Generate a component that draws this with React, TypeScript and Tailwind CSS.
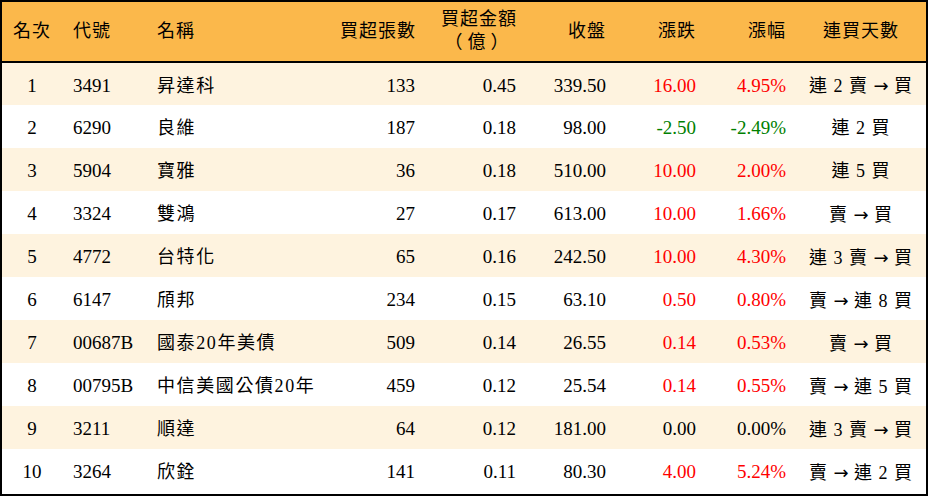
type Row = {
  rank: number;
  code: string;
  name: string;
  lots: number;
  amount: string;
  close: string;
  change: string;
  pct: string;
  streak: string;
};

const rows: Row[] = [
  { rank: 1, code: '3491', name: '昇達科', lots: 133, amount: '0.45', close: '339.50', change: '16.00', pct: '4.95%', streak: '連 2 賣 → 買' },
  { rank: 2, code: '6290', name: '良維', lots: 187, amount: '0.18', close: '98.00', change: '-2.50', pct: '-2.49%', streak: '連 2 買' },
  { rank: 3, code: '5904', name: '寶雅', lots: 36, amount: '0.18', close: '510.00', change: '10.00', pct: '2.00%', streak: '連 5 買' },
  { rank: 4, code: '3324', name: '雙鴻', lots: 27, amount: '0.17', close: '613.00', change: '10.00', pct: '1.66%', streak: '賣 → 買' },
  { rank: 5, code: '4772', name: '台特化', lots: 65, amount: '0.16', close: '242.50', change: '10.00', pct: '4.30%', streak: '連 3 賣 → 買' },
  { rank: 6, code: '6147', name: '頎邦', lots: 234, amount: '0.15', close: '63.10', change: '0.50', pct: '0.80%', streak: '賣 → 連 8 買' },
  { rank: 7, code: '00687B', name: '國泰20年美債', lots: 509, amount: '0.14', close: '26.55', change: '0.14', pct: '0.53%', streak: '賣 → 買' },
  { rank: 8, code: '00795B', name: '中信美國公債20年', lots: 459, amount: '0.12', close: '25.54', change: '0.14', pct: '0.55%', streak: '賣 → 連 5 買' },
  { rank: 9, code: '3211', name: '順達', lots: 64, amount: '0.12', close: '181.00', change: '0.00', pct: '0.00%', streak: '連 3 賣 → 買' },
  { rank: 10, code: '3264', name: '欣銓', lots: 141, amount: '0.11', close: '80.30', change: '4.00', pct: '5.24%', streak: '賣 → 連 2 買' },
];

function tone(v: string) {
  if (v.startsWith('-')) return 'text-[#008000]';
  if (parseFloat(v) > 0) return 'text-[#ff0000]';
  return 'text-black';
}

// the arrow is drawn with DejaVu Sans, whose → is longer than the serif one
function Streak({ text }: { text: string }) {
  const parts = text.split('→');
  return (
    <>
      {parts.map((p, i) => (
        <span key={i}>
          {i > 0 && <span className="font-['DejaVu_Sans',sans-serif] tracking-normal">→</span>}
          {p}
        </span>
      ))}
    </>
  );
}

export default function App() {
  return (
    <div className="w-[928px] h-[496px] bg-white border-2 border-black font-['Liberation_Serif','Noto_Sans_CJK_TC',serif] text-black">
      <table className="w-full table-fixed border-collapse">
        <colgroup>
          <col className="w-[60px]" />
          <col className="w-[84px]" />
          <col className="w-[184px]" />
          <col className="w-[95px]" />
          <col className="w-[101px]" />
          <col className="w-[90px]" />
          <col className="w-[90px]" />
          <col className="w-[90px]" />
          <col className="w-[130px]" />
        </colgroup>
        <thead>
          <tr className="h-[60px] bg-[#fbb84b] border-b-2 border-black text-[18px] tracking-[1px]">
            <th className="font-normal text-center">名次</th>
            <th className="font-normal text-left pl-[11px]">代號</th>
            <th className="font-normal text-left pl-[11px]">名稱</th>
            <th className="font-normal text-right pr-[9px]">買超張數</th>
            <th className="font-normal text-right pr-[9px]">
              <span className="inline-block text-center leading-[23px]">
                買超金額
                <br />
                <span className="tracking-[5px]">（億）</span>
              </span>
            </th>
            <th className="font-normal text-right pr-[10px]">收盤</th>
            <th className="font-normal text-right pr-[10px]">漲跌</th>
            <th className="font-normal text-right pr-[10px]">漲幅</th>
            <th className="font-normal text-center">連買天數</th>
          </tr>
        </thead>
        <tbody className="text-[19px]">
          {rows.map((r, i) => (
            <tr key={r.rank} className={`h-[43px] ${i % 2 === 0 ? 'bg-[#fef3df]' : 'bg-white'}`}>
              <td className="pt-[4px] text-center">{r.rank}</td>
              <td className="pt-[4px] text-left pl-[11px]">{r.code}</td>
              <td className="pt-[4px] text-left pl-[11px] text-[18px] tracking-[1.6px] whitespace-nowrap">{r.name}</td>
              <td className="pt-[4px] text-right pr-[10px]">{r.lots}</td>
              <td className="pt-[4px] text-right pr-[10px]">{r.amount}</td>
              <td className="pt-[4px] text-right pr-[10px]">{r.close}</td>
              <td className={`pt-[4px] text-right pr-[10px] ${tone(r.change)}`}>{r.change}</td>
              <td className={`pt-[4px] text-right pr-[10px] ${tone(r.pct)}`}>{r.pct}</td>
              <td className="pt-[4px] text-center text-[18px] tracking-[1px] whitespace-nowrap">
                <Streak text={r.streak} />
              </td>
            </tr>
          ))}
        </tbody>
      </table>
    </div>
  );
}
